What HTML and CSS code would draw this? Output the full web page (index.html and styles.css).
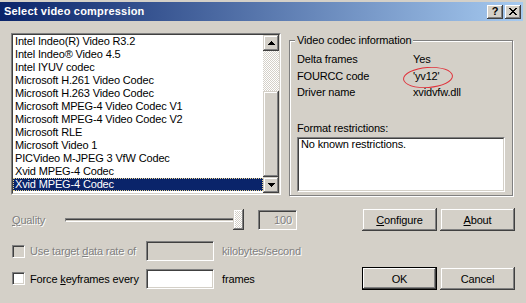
FILE: index.html
```html
<!DOCTYPE html>
<html>
<head>
<meta charset="utf-8">
<link rel="stylesheet" href="styles.css">
</head>
<body>
<div class="window">
  <div class="titlebar">
    <span class="title">Select video compression</span>
    <div class="caption-buttons">
      <span class="cap-btn help">?</span>
      <span class="cap-btn close">
        <svg width="8" height="7" viewBox="0 0 8 7" shape-rendering="crispEdges"><path d="M0 0h2v1h-2zM6 0h2v1h-2zM1 1h2v1h-2zM5 1h2v1h-2zM2 2h4v1h-4zM3 3h2v1h-2zM2 4h4v1h-4zM1 5h2v1h-2zM5 5h2v1h-2zM0 6h2v1h-2zM6 6h2v1h-2z" fill="#000"/></svg>
      </span>
    </div>
  </div>
  <div class="content">
    <div class="top">
      <div class="listbox">
        <div class="listbox-inner">
          <ul class="items">
            <li>Intel Indeo(R) Video R3.2</li>
            <li>Intel Indeo® Video 4.5</li>
            <li>Intel IYUV codec</li>
            <li>Microsoft H.261 Video Codec</li>
            <li>Microsoft H.263 Video Codec</li>
            <li>Microsoft MPEG-4 Video Codec V1</li>
            <li>Microsoft MPEG-4 Video Codec V2</li>
            <li>Microsoft RLE</li>
            <li>Microsoft Video 1</li>
            <li>PICVideo M-JPEG 3 VfW Codec</li>
            <li>Xvid MPEG-4 Codec</li>
            <li class="sel">Xvid MPEG-4 Codec</li>
          </ul>
          <div class="scrollbar">
            <div class="sb-btn">
              <svg width="7" height="4" viewBox="0 0 7 4" shape-rendering="crispEdges"><path d="M3 0h1v1h-1zM2 1h3v1h-3zM1 2h5v1h-5zM0 3h7v1h-7z" fill="#000"/></svg>
            </div>
            <div class="sb-track"></div>
            <div class="sb-thumb"></div>
            <div class="sb-btn">
              <svg width="7" height="4" viewBox="0 0 7 4" shape-rendering="crispEdges"><path d="M0 0h7v1h-7zM1 1h5v1h-5zM2 2h3v1h-3zM3 3h1v1h-1z" fill="#000"/></svg>
            </div>
          </div>
        </div>
      </div>
      <div class="group">
        <span class="legend">Video codec information</span>
        <div class="info">
          <span>Delta frames</span><span>Yes</span>
          <span>FOURCC code</span><span class="fourcc">'yv12'</span>
          <span>Driver name</span><span>xvidvfw.dll</span>
        </div>
        <div class="fr-label">Format restrictions:</div>
        <div class="textbox"><div class="textbox-inner">No known restrictions.</div></div>
      </div>
    </div>

    <div class="row row-quality">
      <span class="lbl-quality disabled"><u>Q</u>uality</span>
      <div class="slider">
        <div class="slider-track"></div>
        <div class="slider-thumb"></div>
      </div>
      <div class="edit edit-small is-disabled"><span class="disabled">100</span></div>
      <div class="btn-group">
        <div class="btn"><span><u>C</u>onfigure</span></div>
        <div class="btn"><span><u>A</u>bout</span></div>
      </div>
    </div>

    <div class="row row-rate">
      <span class="check is-disabled"></span>
      <span class="check-label disabled">Use target <u>d</u>ata rate of</span>
      <div class="edit is-disabled"></div>
      <span class="unit disabled">kilobytes/second</span>
    </div>

    <div class="row row-keys">
      <span class="check"></span>
      <span class="check-label">Force <u>k</u>eyframes every</span>
      <div class="edit"></div>
      <span class="unit">frames</span>
      <div class="btn-group">
        <div class="btn default"><span>OK</span></div>
        <div class="btn"><span>Cancel</span></div>
      </div>
    </div>
  </div>
</div>
</body>
</html>
```
FILE: styles.css
```css
* { box-sizing: border-box; }
html, body { margin: 0; padding: 0; }
body {
  width: 526px;
  height: 303px;
  overflow: hidden;
  background: #D4D0C8;
  font-family: "Liberation Sans", Arial, sans-serif;
  font-size: 11px;
  letter-spacing: -0.15px;
  color: #000;
}
.window {
  width: 526px;
  height: 303px;
  background: #D4D0C8;
  display: flex;
  flex-direction: column;
}
.titlebar {
  margin: 2px 3px 0 0;
  height: 19px;
  background: linear-gradient(to right, #0A246A, #A6CAF0);
  display: flex;
  align-items: center;
  padding: 0 2px 0 4px;
}
.title {
  flex: 1;
  color: #fff;
  font-weight: bold;
  font-size: 11px;
  letter-spacing: 0.2px;
  line-height: 13px;
}
.caption-buttons { display: flex; gap: 2px; }
.cap-btn {
  width: 16px;
  height: 14px;
  background: #D4D0C8;
  box-shadow: inset -1px -1px #404040, inset 1px 1px #fff, inset -2px -2px #808080, inset 2px 2px #D4D0C8;
  display: flex;
  align-items: center;
  justify-content: center;
  font-weight: bold;
  font-size: 11px;
  line-height: 11px;
}
.cap-btn.help { padding-bottom: 1px; }
.cap-btn svg { display: block; margin-top: -1px; }

.content { padding: 0 11px; }
.top {
  display: flex;
  align-items: flex-start;
  gap: 8px;
  margin-top: 12px;
}
.listbox {
  width: 270px;
  height: 162px;
  border: 1px solid;
  border-color: #808080 #fff #fff #808080;
}
.listbox-inner {
  height: 100%;
  border: 1px solid;
  border-color: #404040 #D4D0C8 #D4D0C8 #404040;
  background: #fff;
  display: flex;
}
.items {
  list-style: none;
  margin: 0;
  padding: 0;
  flex: 1;
  overflow: hidden;
}
.items li {
  height: 13px;
  line-height: 13px;
  padding-left: 2px;
  white-space: nowrap;
}
.items li.sel {
  background: #0A246A;
  color: #fff;
  outline: 1px dotted #E6D28C;
  outline-offset: -1px;
}
.scrollbar {
  width: 16px;
  display: flex;
  flex-direction: column;
}
.sb-btn, .sb-thumb, .slider-thumb, .btn {
  background: #D4D0C8;
  box-shadow: inset -1px -1px #404040, inset 1px 1px #D4D0C8, inset -2px -2px #808080, inset 2px 2px #fff;
}
.sb-btn {
  height: 16px;
  display: flex;
  align-items: center;
  justify-content: center;
}
.sb-btn svg { display: block; }
.sb-track {
  height: 40px;
  background-color: #D4D0C8;
  background-image: repeating-conic-gradient(#fff 0 25%, #D4D0C8 0 50%);
  background-size: 2px 2px;
}
.sb-thumb { flex: 1; }

.group {
  position: relative;
  width: 224px;
  margin-top: 7px;
  border: 1px solid #808080;
  box-shadow: 1px 1px 0 #fff, inset 1px 1px 0 #fff;
  padding: 10px 7px 3px 7px;
}
.legend {
  position: absolute;
  top: -7px;
  left: 5px;
  padding: 0 2px;
  line-height: 13px;
  background: #D4D0C8;
}
.info {
  display: grid;
  grid-template-columns: 116px 1fr;
  grid-template-rows: 17px 16px 16px;
  align-items: center;
  line-height: 13px;
}
.fourcc { position: relative; justify-self: start; }
.fourcc::after {
  content: "";
  position: absolute;
  left: -10px;
  top: -3px;
  width: 48px;
  height: 19px;
  border: 1px solid #E0303A;
  border-radius: 50%;
  transform: rotate(-4deg);
}
.fr-label { margin-top: 22px; line-height: 13px; }
.textbox, .edit, .check {
  border: 1px solid;
  border-color: #808080 #fff #fff #808080;
}
.textbox { margin-top: 2px; height: 55px; }
.textbox-inner, .edit, .check { background: #fff; }
.textbox-inner {
  height: 100%;
  border: 1px solid;
  border-color: #404040 #D4D0C8 #D4D0C8 #404040;
  padding: 0 2px;
  line-height: 11px;
}
.edit, .check {
  box-shadow: inset 1px 1px #404040, inset -1px -1px #D4D0C8;
}

.row { display: flex; align-items: center; }
.row-quality { margin-top: 12px; height: 23px; }
.row-rate { margin-top: 10px; height: 20px; }
.row-keys { margin-top: 6px; height: 23px; }

.disabled { color: #808080; text-shadow: 1px 1px 0 #fff; }
.is-disabled { background: #D4D0C8; }

.lbl-quality { width: 54px; padding-left: 1px; }
.slider {
  position: relative;
  width: 179px;
  height: 23px;
  display: flex;
  align-items: center;
}
.slider-track {
  width: 175px;
  height: 4px;
  border: 1px solid;
  border-color: #808080 #fff #fff #808080;
  background: #D4D0C8;
  box-shadow: inset 0 1px #404040;
}
.slider-thumb {
  position: absolute;
  left: 168px;
  top: 1px;
  width: 11px;
  height: 21px;
  background-color: #D4D0C8;
  background-image: repeating-conic-gradient(#fff 0 25%, #D4D0C8 0 50%);
  background-size: 2px 2px;
}
.edit { width: 68px; height: 20px; }
.edit-small {
  width: 39px;
  margin-left: 14px;
  display: flex;
  align-items: center;
  justify-content: flex-end;
  padding-right: 4px;
}
.btn-group { margin-left: auto; display: flex; gap: 3px; }
.btn {
  width: 75px;
  height: 23px;
  display: flex;
  align-items: center;
  justify-content: center;
}
.btn.default {
  border: 1px solid #000;
  box-shadow: inset -1px -1px #404040, inset 1px 1px #fff, inset -2px -2px #808080, inset 2px 2px #D4D0C8;
}
.check { width: 13px; height: 13px; margin-left: 1px; }
.check.is-disabled { background: #D4D0C8; }
.check-label { width: 121px; padding-left: 5px; white-space: nowrap; }
.unit { margin-left: 8px; }
```
